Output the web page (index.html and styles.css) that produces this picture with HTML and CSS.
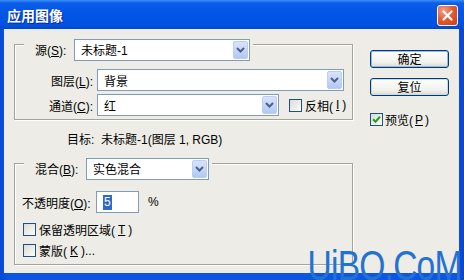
FILE: index.html
```html
<!DOCTYPE html>
<html lang="zh-CN">
<head>
  <meta charset="UTF-8">
  <title>应用图像</title>
  <link rel="stylesheet" href="styles.css">
</head>
<body>

  <div class="window">
    <div class="titlebar">
      <span class="title">应用图像</span>
      <button class="close" aria-label="关闭">
        <svg width="13" height="13" viewBox="0 0 13 13"><path d="M2.5 2.5L10.5 10.5M10.5 2.5L2.5 10.5" stroke="#fff" stroke-width="2.2" stroke-linecap="round"/></svg>
      </button>
    </div>

    <div class="client">
      <div class="main">

        <div class="group group-source">
          <div class="group-head">
            <span class="head-label label-source">源(<u>S</u>):</span>
            <div class="combo combo-source"><span class="combo-text">未标题-1</span><span class="drop"><svg width="9" height="6" viewBox="0 0 9 6"><path d="M1 1l3.5 3.5L8 1" stroke="#4d6185" stroke-width="2" fill="none"/></svg></span></div>
          </div>
          <div class="rows">
            <span class="row-label">图层(<u>L</u>):</span>
            <div class="combo combo-layer"><span class="combo-text">背景</span><span class="drop"><svg width="9" height="6" viewBox="0 0 9 6"><path d="M1 1l3.5 3.5L8 1" stroke="#4d6185" stroke-width="2" fill="none"/></svg></span></div>
            <span class="row-label">通道(<u>C</u>):</span>
            <div class="channel-row">
              <div class="combo combo-channel"><span class="combo-text">红</span><span class="drop"><svg width="9" height="6" viewBox="0 0 9 6"><path d="M1 1l3.5 3.5L8 1" stroke="#4d6185" stroke-width="2" fill="none"/></svg></span></div>
              <label class="check"><span class="box"></span>反相(<u>I</u>)</label>
            </div>
          </div>
        </div>

        <div class="target">目标:&nbsp; 未标题-1(图层 1, RGB)</div>

        <div class="group group-blend">
          <div class="group-head">
            <span class="head-label label-blend">混合(<u>B</u>):</span>
            <div class="combo combo-blend"><span class="combo-text">实色混合</span><span class="drop"><svg width="9" height="6" viewBox="0 0 9 6"><path d="M1 1l3.5 3.5L8 1" stroke="#4d6185" stroke-width="2" fill="none"/></svg></span></div>
          </div>
          <div class="opacity-row">
            <span class="opacity-label">不透明度(<u>O</u>):</span>
            <div class="field"><span class="selected">5</span></div>
            <span class="unit">%</span>
          </div>
          <div class="checks">
            <label class="check"><span class="box"></span>保留透明区域(<u>T</u>)</label>
            <label class="check"><span class="box"></span>蒙版(<u>K</u>)...</label>
          </div>
        </div>

      </div>

      <div class="side">
        <button class="btn btn-default">确定</button>
        <button class="btn">复位</button>
        <label class="check preview"><span class="box"><svg width="9" height="9" viewBox="0 0 9 9"><path d="M1 4.2l2.5 2.5L8 1.8" stroke="#21a121" stroke-width="2" fill="none"/></svg></span>预览(<u>P</u>)</label>
      </div>
    </div>

    <div class="watermark">UiBQ.CoM</div>
  </div>

</body>
</html>
```

FILE: styles.css
```css
body {
  margin: 0;
  background: #fff;
  color: #000;
  font: 12px "Liberation Sans", "Noto Sans CJK SC", sans-serif;
}

u {
  text-decoration: underline;
}

.window {
  width: 464px;
  height: 280px;
  position: relative;
  overflow: hidden;
  display: flex;
  flex-direction: column;
  background: linear-gradient(90deg, #0a48d6, #0f55e3 2%, #0f55e3 98%, #0a44cf);
}

.titlebar {
  height: 29px;
  flex: none;
  display: flex;
  align-items: center;
  justify-content: space-between;
  padding: 0 6px 0 7px;
  background: linear-gradient(#3d8ef5 0, #0b5de9 3px, #0055e4 50%, #0152e1 85%, #0047d2 100%);
}

.title {
  color: #fff;
  font: bold 14px "Noto Sans CJK SC", sans-serif;
  text-shadow: 1px 1px #0b2a8c;
}

.close {
  width: 21px;
  height: 21px;
  margin-top: 2px;
  padding: 0;
  border: 1px solid #fff;
  border-radius: 3px;
  background: radial-gradient(circle at 30% 25%, #f3a28b, #e45c34 45%, #c93f14);
  display: flex;
  align-items: center;
  justify-content: center;
}

.client {
  flex: 1;
  margin: 0 5px 7px 4px;
  background: #edece6;
  display: flex;
  gap: 17px;
  padding-left: 10px;
}

.main {
  width: 339px;
}

/* Gruppboxar */
.group {
  border: 1px solid #a3a39b;
  box-shadow: 1px 1px 0 #fff, inset 1px 1px 0 #fff;
}

.group-source {
  margin-top: 15px;
}

.group-blend {
  margin-top: 16px;
}

.group-head {
  display: flex;
  align-items: center;
  width: fit-content;
  height: 23px;
  margin: -7px 0 0 9px;
  padding: 0 3px 0 11px;
  background: #edece6;
}

.label-source {
  width: 39px;
}

.label-blend {
  width: 51px;
}

.combo {
  height: 22px;
  box-sizing: border-box;
  border: 1px solid #7f9db9;
  background: #fff;
  display: flex;
  align-items: center;
  padding-left: 6px;
}

.combo-text {
  flex: 1;
}

.drop {
  width: 15px;
  height: 18px;
  margin: 1px;
  box-sizing: border-box;
  border: 1px solid #bccdf3;
  border-radius: 2px;
  background: linear-gradient(#d7e3fb, #c2d4f8 60%, #b2c7f3);
  display: flex;
  align-items: center;
  justify-content: center;
}

.combo-source {
  width: 176px;
}

.combo-layer {
  width: 247px;
}

.combo-channel {
  width: 182px;
}

.combo-blend {
  width: 123px;
}

.rows {
  display: grid;
  grid-template-columns: 78px auto;
  column-gap: 4px;
  row-gap: 3px;
  align-items: center;
  margin-top: 8px;
  padding-bottom: 3px;
}

.row-label {
  text-align: right;
}

.channel-row {
  display: flex;
  align-items: center;
  gap: 10px;
}

.check {
  display: flex;
  align-items: center;
  gap: 3px;
  height: 13px;
}

.box {
  width: 13px;
  height: 13px;
  box-sizing: border-box;
  border: 1px solid #1c5180;
  background: linear-gradient(135deg, #dcdcd5, #fbfbf9);
  display: flex;
  align-items: center;
  justify-content: center;
}

.target {
  margin-top: 13px;
  padding-left: 53px;
  line-height: 14px;
}

.opacity-row {
  display: flex;
  align-items: center;
  margin-top: 11px;
  padding-left: 7px;
}

.opacity-label {
  width: 74px;
}

.field {
  width: 43px;
  height: 22px;
  box-sizing: border-box;
  border: 1px solid #7f9db9;
  background: #fff;
  display: flex;
  align-items: center;
  padding-left: 6px;
}

.selected {
  background: #316ac5;
  color: #fff;
  padding: 0 1px;
  line-height: 15px;
}

.unit {
  margin-left: 9px;
}

.checks {
  display: flex;
  flex-direction: column;
  gap: 8px;
  margin-top: 10px;
  padding: 0 0 7px 8px;
}

/* Knappar till höger */
.side {
  width: 79px;
  padding-top: 21px;
  display: flex;
  flex-direction: column;
  gap: 10px;
}

.btn {
  width: 79px;
  height: 18px;
  padding: 0;
  border: 1px solid #003c74;
  border-radius: 3px;
  background: linear-gradient(#ffffff, #f1f1ec 70%, #dcd8cc);
  font: 12px "Noto Sans CJK SC", sans-serif;
  line-height: 14px;
  color: #000;
  box-shadow: inset 0 0 0 1px #c9d8f2;
}

.btn-default {
  box-shadow: inset 0 0 0 1px #9bb9ec;
}

.preview {
  margin-top: 7px;
  gap: 2px;
}

.watermark {
  position: absolute;
  right: 2px;
  bottom: -7px;
  color: #2472cf;
  font: 42px "Liberation Sans", sans-serif;
  letter-spacing: -1px;
  line-height: 1;
  transform: scaleX(0.8);
  transform-origin: right bottom;
}
```
